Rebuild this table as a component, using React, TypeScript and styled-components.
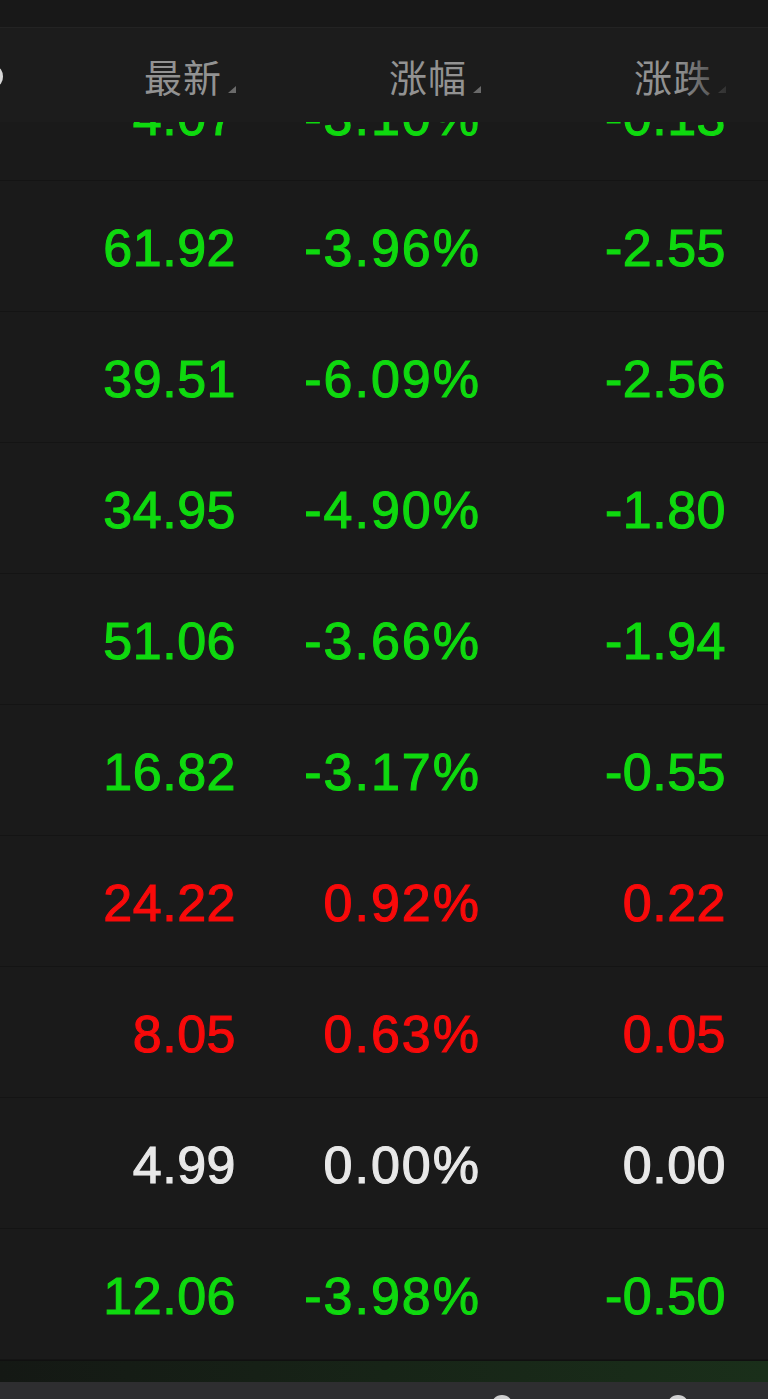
import React from 'react';
import styled, { createGlobalStyle } from 'styled-components';

const GlobalStyle = createGlobalStyle`
    html, body {
        margin: 0;
        padding: 0;
        background: #1a1a1a;
    }
    body {
        font-family: "Liberation Sans", "Noto Sans CJK SC", sans-serif;
    }
`;

type Trend = 'down' | 'up' | 'flat';

type Quote = {
    price: string;
    pct: string;
    change: string;
    trend: Trend;
};

const quotes: Quote[] = [
    { price: '4.07', pct: '-3.10%', change: '-0.13', trend: 'down' },
    { price: '61.92', pct: '-3.96%', change: '-2.55', trend: 'down' },
    { price: '39.51', pct: '-6.09%', change: '-2.56', trend: 'down' },
    { price: '34.95', pct: '-4.90%', change: '-1.80', trend: 'down' },
    { price: '51.06', pct: '-3.66%', change: '-1.94', trend: 'down' },
    { price: '16.82', pct: '-3.17%', change: '-0.55', trend: 'down' },
    { price: '24.22', pct: '0.92%', change: '0.22', trend: 'up' },
    { price: '8.05', pct: '0.63%', change: '0.05', trend: 'up' },
    { price: '4.99', pct: '0.00%', change: '0.00', trend: 'flat' },
    { price: '12.06', pct: '-3.98%', change: '-0.50', trend: 'down' },
];

const trendColor: Record<Trend, string> = {
    down: '#0fd90f',
    up: '#f80a0a',
    flat: '#e8e8e8',
};

const Page = styled.div`
    width: 768px;
    height: 1399px;
    overflow: hidden;
    background: #1a1a1a;
    display: flex;
    flex-direction: column;
`;

const StatusStrip = styled.div`
    height: 27px;
    background: #181818;
    flex-shrink: 0;
`;

const Columns = styled.div`
    display: grid;
    grid-template-columns: 236px 245px 245px;
    padding-right: 42px;
`;

const Header = styled(Columns)`
    position: relative;
    height: 95px;
    flex-shrink: 0;
    background: #1c1c1c;
    border-top: 1px solid #232323;
    box-sizing: border-box;
    z-index: 2;

    // cut-off item of the scrolled left column
    &::before {
        content: '';
        position: absolute;
        left: -10px;
        top: 39px;
        width: 13px;
        height: 19px;
        border-radius: 50%;
        background: #d8d8d8;
    }

    // right edge fade
    &::after {
        content: '';
        position: absolute;
        right: 30px;
        top: 0;
        width: 60px;
        height: 100%;
        background: linear-gradient(to right, rgba(28, 28, 28, 0), rgba(28, 28, 28, 0.9));
    }
`;

const HeadCell = styled.div`
    display: flex;
    justify-content: flex-end;
    align-items: center;
    padding-top: 2px;
`;

const HeadLabel = styled.span`
    font-family: "Noto Sans CJK SC", sans-serif;
    font-size: 38px;
    line-height: 1;
    color: #929292;
    letter-spacing: 1px;
`;

const SortMark = styled.span`
    width: 0;
    height: 0;
    margin-left: 6px;
    margin-top: 26px;
    border-left: 8px solid transparent;
    border-bottom: 7px solid #6a6a6a;
`;

const ListViewport = styled.div`
    flex: 1;
    overflow: hidden;
    display: flex;
    flex-direction: column;
`;

const List = styled.div`
    margin-top: -72px;
`;

const Row = styled(Columns)`
    height: 131px;
    box-sizing: border-box;
    border-bottom: 1px solid #141414;
    align-items: center;
    padding-top: 4px;
`;

const Value = styled.span<{ $trend: Trend }>`
    text-align: right;
    font-size: 52px;
    line-height: 1;
    letter-spacing: 0.5px;
    color: ${(p) => trendColor[p.$trend]};
    -webkit-text-stroke: 1.1px ${(p) => trendColor[p.$trend]};
`;

const Pct = styled(Value)`
    letter-spacing: 2px;
`;

const GreenStrip = styled.div`
    height: 22px;
    flex-shrink: 0;
    border-top: 1px solid #101010;
    box-sizing: border-box;
    background: linear-gradient(to right, #141814, #172417 50%, #1a2f1a);
`;

const TabBar = styled.div`
    height: 17px;
    flex-shrink: 0;
    background: #2e2e30;
    overflow: hidden;
    display: flex;
    gap: 154px;
    padding-left: 491px;
    padding-top: 13px;
    box-sizing: border-box;
`;

const TabDot = styled.span`
    width: 22px;
    height: 22px;
    border-radius: 50%;
    background: #cfcfcf;
    flex-shrink: 0;
`;

export default function App() {
    const headers = ['最新', '涨幅', '涨跌'];

    return (
        <>
            <GlobalStyle />
            <Page>
                <StatusStrip />
                <Header>
                    {headers.map((h) => (
                        <HeadCell key={h}>
                            <HeadLabel>{h}</HeadLabel>
                            <SortMark />
                        </HeadCell>
                    ))}
                </Header>
                <ListViewport>
                    <List>
                        {quotes.map((q, i) => (
                            <Row key={i}>
                                <Value $trend={q.trend}>{q.price}</Value>
                                <Pct $trend={q.trend}>{q.pct}</Pct>
                                <Value $trend={q.trend}>{q.change}</Value>
                            </Row>
                        ))}
                    </List>
                </ListViewport>
                <GreenStrip />
                <TabBar>
                    <TabDot />
                    <TabDot />
                </TabBar>
            </Page>
        </>
    );
}
